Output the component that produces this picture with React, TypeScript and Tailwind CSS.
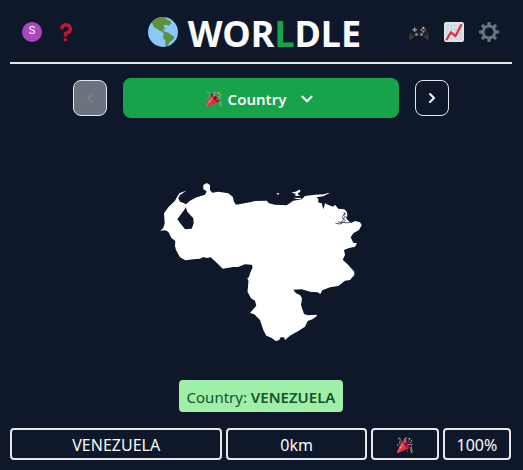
import { ChevronDown, ChevronLeft, ChevronRight } from "lucide-react";
import type { ReactNode } from "react";

function Globe() {
  return (
    <svg viewBox="0 0 36 36" className="size-[30px] shrink-0" aria-hidden="true">
      <circle cx="18" cy="18" r="18" fill="#88c9f9" />
      <path
        fill="#5c913b"
        d="M4.200 6.200C7 3.400 10 1.600 14 .5L19 .1l3 .5-.5 2 2 .7 3.700 1.700.3 2.800L25 10.500l-2.400-.9-2.800-.3-1.200 2.600 2.700 1-2.800 2.400-2 1.200 3.200-.5.2 2.300 2.700 1.300-3.900-.5-2.100-1.300-2.800-1.500-2.800-2-4-2.400-1.500-2.800z"
      />
      <path
        fill="#5c913b"
        d="M18.500 20.200l2.700-2.100 3.300.9 3.100 2.700 4 1.400-1.200 4-3.500 2.700-2.200 2.500-1.900 2.800-1.700-.2-.3-6.300-2.500-3.300z"
      />
    </svg>
  );
}

function QuestionMark() {
  return (
    <svg viewBox="0 0 36 36" className="size-5" aria-hidden="true">
      <path
        fill="#be1931"
        d="M17 27c-1.657 0-3-1.343-3-3v-4c0-1.657 1.343-3 3-3 .603-.006 6-1 6-5 0-2-2-4-5-4-2.441 0-4 2-4 3 0 1.657-1.343 3-3 3s-3-1.343-3-3c0-4.878 4.58-9 10-9 8 0 11 5.982 11 11 0 4.145-2.277 7.313-6.413 8.920-.9.351-1.790.587-2.587.747V24c0 1.657-1.343 3-3 3z"
      />
      <circle fill="#be1931" cx="17" cy="32" r="3" />
    </svg>
  );
}

function Gamepad() {
  return (
    <svg viewBox="0 0 36 36" className="size-5" aria-hidden="true">
      <path fill="#31373d" d="M3 16C0 22 0 28 .8 31c.9 1.800 3.600 1 5.200-1l5-6h14l5 6c1.600 2 4.300 2.800 5.200 1C36 28 36 22 33 16z" />
      <path
        fill="#191d21"
        d="M10 8c3 0 4 1.500 8 1.500S23 8 26 8c4 0 7 5 8 11l-4 4-3 1c-1 3-5 3-6 0h-6c-1 3-5 3-6 0l-3-1-4-4C3 13 6 8 10 8z"
      />
      <path fill="#8899a6" d="M9 10h2.500v2.800h2.800v2.500h-2.800v2.800H9v-2.800H6.200v-2.500H9z" />
      <circle cx="13.500" cy="22.500" r="3" fill="#66757f" />
      <circle cx="22.500" cy="22.500" r="3" fill="#66757f" />
      <circle cx="26" cy="10.500" r="2" fill="#ffcc4d" />
      <circle cx="29.300" cy="14" r="2" fill="#dd2e44" />
      <circle cx="22.700" cy="14" r="2" fill="#55acee" />
      <circle cx="26" cy="17.500" r="2" fill="#77b255" />
    </svg>
  );
}

function ChartUp() {
  return (
    <svg viewBox="0 0 36 36" className="size-5" aria-hidden="true">
      <rect width="36" height="36" rx="4" fill="#e1e8ed" />
      <path fill="#ccd6dd" d="M3 3h30v30H3z" />
      <path stroke="#e1e8ed" strokeWidth="1.500" d="M9.500 3v30M17 3v30M24.500 3v30M3 10h30M3 18h30M3 26h30" />
      <path
        d="M5 31l7.500-12.500 8 7L31 5.500"
        fill="none"
        stroke="#dd2e44"
        strokeWidth="4"
        strokeLinecap="round"
        strokeLinejoin="round"
      />
    </svg>
  );
}

function Gear() {
  return (
    <svg viewBox="0 0 36 36" className="size-5" aria-hidden="true">
      <path
        fill="#66757f"
        d="M34 15h-3.362c-.324-1.369-.864-2.651-1.582-3.814l2.379-2.379c.781-.781.781-2.048 0-2.829l-1.414-1.414c-.781-.781-2.047-.781-2.828 0l-2.379 2.379C23.65 6.225 22.369 5.686 21 5.362V2c0-1.104-.896-2-2-2h-2c-1.104 0-2 .896-2 2v3.362c-1.369.324-2.651.864-3.814 1.582L8.808 4.565c-.781-.781-2.048-.781-2.828 0L4.565 5.979c-.781.781-.781 2.048-.001 2.829l2.379 2.379C6.225 12.35 5.686 13.632 5.362 15H2c-1.104 0-2 .896-2 2v2c0 1.104.896 2 2 2h3.362c.324 1.368.864 2.65 1.582 3.813l-2.379 2.379c-.78.78-.78 2.048.001 2.829l1.414 1.414c.78.78 2.047.78 2.828 0l2.379-2.379c1.163.719 2.445 1.258 3.814 1.582V34c0 1.104.896 2 2 2h2c1.104 0 2-.896 2-2v-3.362c1.368-.324 2.65-.864 3.813-1.582l2.379 2.379c.781.781 2.047.781 2.828 0l1.414-1.414c.781-.781.781-2.048 0-2.829l-2.379-2.379c.719-1.163 1.258-2.445 1.582-3.814H34c1.104 0 2-.896 2-2v-2C36 15.896 35.104 15 34 15zM18 26c-4.418 0-8-3.582-8-8s3.582-8 8-8 8 3.582 8 8-3.582 8-8 8z"
      />
    </svg>
  );
}

function PartyPopper() {
  return (
    <svg viewBox="0 0 36 36" className="size-4 shrink-0" aria-hidden="true">
      <path fill="#dd2e44" d="M11.626 7.488c-.112.112-.197.247-.268.395l-.008-.008L.134 33.141l.011.011c-.208.403.14 1.223.853 1.937.713.713 1.533 1.061 1.936.853l.01.01L28.21 24.735l-.008-.009c.147-.07.282-.155.395-.269 1.562-1.562-.971-6.627-5.656-11.313-4.687-4.686-9.752-7.218-11.315-5.656z" />
      <path fill="#ea596e" d="M13 12l-.416-.282L.19 32.96l-.056.18.011.011c-.208.403.14 1.223.853 1.937.232.232.473.408.709.557L17 17l-4-5z" />
      <path fill="#a0041e" d="M23.012 13.066c4.67 4.672 7.263 9.652 5.789 11.124-1.473 1.474-6.453-1.118-11.126-5.788-4.671-4.672-7.263-9.654-5.79-11.127 1.474-1.473 6.454 1.119 11.127 5.791z" />
      <path fill="#aa8dd8" d="M18.59 13.609c-.199.161-.459.245-.734.215-.868-.094-1.598-.396-2.109-.873-.541-.505-.808-1.183-.735-1.862.128-1.192 1.324-2.286 3.363-2.066.793.085 1.147-.17 1.159-.292.014-.121-.277-.446-1.07-.532-.868-.094-1.598-.396-2.11-.873-.541-.505-.809-1.183-.735-1.862.13-1.192 1.325-2.286 3.362-2.065.578.062.883-.057 1.012-.134.103-.063.144-.123.148-.158.012-.121-.275-.446-1.07-.532-.549-.06-.947-.552-.886-1.102.059-.549.55-.946 1.101-.886 2.037.219 2.973 1.542 2.844 2.735-.13 1.194-1.325 2.286-3.364 2.067-.578-.063-.88.057-1.01.134-.103.062-.145.123-.149.157-.013.122.276.446 1.071.532 2.037.22 2.973 1.542 2.844 2.735-.129 1.192-1.324 2.286-3.362 2.065-.578-.062-.882.058-1.012.134-.104.064-.144.124-.148.158-.013.121.276.446 1.07.532.548.06.947.553.886 1.102-.028.274-.167.511-.366.671z" />
      <path fill="#77b255" d="M30.661 22.857c1.973-.557 3.334.323 3.658 1.478.324 1.154-.378 2.615-2.35 3.17-.77.216-1.001.584-.97.701.034.118.425.312 1.193.095 1.972-.555 3.333.325 3.657 1.479.326 1.155-.378 2.614-2.351 3.17-.769.216-1.001.585-.967.702.033.117.423.311 1.192.095.53-.149 1.084.16 1.233.691.148.532-.161 1.084-.693 1.234-1.971.555-3.333-.323-3.659-1.479-.324-1.154.379-2.613 2.353-3.169.77-.217 1.001-.584.967-.702-.032-.117-.422-.312-1.19-.096-1.974.556-3.334-.322-3.659-1.479-.325-1.154.378-2.613 2.351-3.17.768-.215.999-.585.967-.701-.034-.118-.423-.312-1.192-.096-.532.15-1.083-.16-1.233-.691-.149-.53.161-1.082.693-1.232z" />
      <path fill="#aa8dd8" d="M23.001 20.16c-.294 0-.584-.129-.782-.375-.345-.432-.274-1.061.156-1.406.218-.175 5.418-4.259 12.767-3.208.547.078.927.584.849 1.131-.078.546-.58.93-1.132.848-6.493-.922-11.187 2.754-11.233 2.791-.186.148-.406.219-.625.219z" />
      <path fill="#77b255" d="M5.754 16c-.095 0-.192-.014-.288-.042-.529-.159-.829-.716-.67-1.245 1.133-3.773 2.16-9.794.898-11.364-.141-.178-.354-.353-.842-.316-.938.072-.849 2.051-.848 2.071.042.551-.372 1.031-.922 1.072-.559.034-1.031-.372-1.072-.923-.103-1.379.326-4.035 2.692-4.214 1.056-.08 1.933.287 2.552 1.057 2.371 2.951-.036 11.506-.542 13.192-.13.433-.528.712-.958.712z" />
      <circle fill="#5c913b" cx="25.5" cy="9.5" r="1.5" />
      <circle fill="#9266cc" cx="2" cy="18" r="2" />
      <circle fill="#5c913b" cx="32.5" cy="19.5" r="1.5" />
      <circle fill="#5c913b" cx="23.5" cy="31.5" r="1.5" />
      <circle fill="#ffcc4d" cx="28" cy="4" r="2" />
      <circle fill="#ffcc4d" cx="32.5" cy="8.5" r="1.5" />
      <circle fill="#ffcc4d" cx="29.5" cy="12.5" r="1.5" />
      <circle fill="#ffcc4d" cx="7.5" cy="23.5" r="1.5" />
    </svg>
  );
}

function CountryShape() {
  return (
    <svg viewBox="160 182 202 160" className="h-40 w-[202px]" role="img" aria-label="Country outline">
      <path
        fill="#fff"
        fillRule="evenodd"
        d="M186.700 190.500L179.300 193.300 177 197 175 200.700 168.300 207.300 164 213.300 164.700 223.300 163.300 228 160.300 230.700 165 230.300 168.300 231.700 171.300 237.700 175.300 241 175 246 176 250 180 257.300 185.300 260.300 193.300 259.300 200 258.700 203.300 257 206.700 258 210.700 257.300 216.700 262.700 222.700 268.700 233 267 238 267 245 264.300 251.700 264.700 252.700 267.300 250 273.300 249 277 247.300 278.300 248.500 281 247.500 291.700 251 298.300 255 300.700 256.300 305.700 250 313 254.300 314.300 260 320 263.300 330 266.300 335.700 271.700 338 275.700 341 279 340.300 280.700 337.300 284 337.300 285 340 290 335.700 298.300 331 305 326.700 307.700 321 312.300 319.300 316.700 316.300 316.700 314.700 308.300 315.300 304 314 301 305 302 298.300 300 295 296 293.300 293.300 289.700 301.700 289.300 310 291.700 317.700 292.300 320.300 294 322.300 290.300 330 287.300 338.300 286 345 280.700 350 280 354.300 275 354.300 271.700 348.300 265 342.700 259.700 345 255 344 250 348.300 248.300 355 246.700 357 243.300 353.300 242.700 350.700 237.300 353.300 233.300 359 230 361.700 225 360 222.300 355 221 351.700 222.700 348.500 221 346 218 347.500 215 346.700 211.700 344.300 209.300 338.300 208.700 335 204.700 333.300 206.700 329 205.300 325 203.300 323.300 209.300 321.700 203.300 318.300 202.500 318.300 199 316.500 197.300 323.300 196.300 329.700 193 328 193 324 194.300 315 194.700 305 196 301.700 199.300 293.300 200.700 286.700 205.300 275 204.700 269 203.300 266.700 200.700 255 201 250 202.300 236 204.700 234 201.700 232.700 196.700 228.300 193.300 218.300 191.700 212.300 192.700 210 190 210 185 206.700 183 203.300 185 203.300 189.300 206.700 191.300 205 194.700 196.700 197.300 190 200.700 186 204.300 183.500 203 180 201.700 178.300 198.300 180 195zM184.700 209.300L177.300 219.300 181.700 225 185 229.300 191.700 228.700 193.700 223.300 193.300 218.300 187.300 211.700 185.700 207z"
      />
      <path fill="#fff" d="M276.300 193.800l1.700-.8 1.500.8-1.500.9zM291.500 192.600l4-.9 4.500-2.200.3 2.200-2.500 1.500.5 1.800 1.800.3-1 .8-4.200-.4 1-2-2-.2zM293.500 197.800l7 .2 1 1-5-.1z" />
      <path
        fill="none"
        stroke="#0f172a"
        strokeWidth=".7"
        d="M343.500 212.500l2 1-1.500 2 1.500 1.500-2 1.500 1.500 2-2.500 2.500M345 213l-2.500 3.500 1 3-3 3.500M335.500 223.200l4.500.8 3.500-1.600 3.500.4 4.500-.6M338 222l4.500.5"
      />
    </svg>
  );
}

function IconButton({ label, children }: { label: string; children: ReactNode }) {
  return (
    <button type="button" aria-label={label} className="flex size-5 items-center justify-center">
      {children}
    </button>
  );
}

function ResultCell({ wide = "", children }: { wide?: string; children: ReactNode }) {
  return (
    <div className={`flex h-8 items-center justify-center rounded border-2 border-gray-200 pt-0.5 ${wide}`}>
      {children}
    </div>
  );
}

export default function App() {
  return (
    <div className="min-h-screen bg-[#0f172a] pr-[11px] pb-2.5 pl-2.5 font-['Noto_Sans',sans-serif] text-base text-slate-50">
      <header className="flex h-16 items-center justify-between border-b-2 border-gray-200 px-3 pt-px">
        <div className="flex w-[78px] items-center gap-3.5">
          <button
            type="button"
            aria-label="Profile"
            className="flex size-5 items-center justify-center rounded-full bg-[#ab47bc] font-[Roboto,sans-serif] text-[11px] text-white"
          >
            S
          </button>
          <IconButton label="How to play">
            <QuestionMark />
          </IconButton>
        </div>
        <h1 className="flex items-center gap-2.5 text-4xl font-bold">
          <Globe />
          <span className="pt-1">
            WOR<span className="text-[#16a34a]">L</span>DLE
          </span>
        </h1>
        <nav className="flex items-center gap-[15px] pr-px">
          <IconButton label="Other games">
            <Gamepad />
          </IconButton>
          <IconButton label="Statistics">
            <ChartUp />
          </IconButton>
          <IconButton label="Settings">
            <Gear />
          </IconButton>
        </nav>
      </header>

      <main className="flex flex-col items-center">
        <div className="mt-3.5 flex w-3/4 items-center gap-4">
          <button
            type="button"
            disabled
            aria-label="Previous round"
            className="flex h-9 w-[34px] items-center justify-center rounded-lg border border-gray-200 bg-[#6b7280] text-[#85807a]"
          >
            <ChevronLeft className="size-4" strokeWidth={3} />
          </button>
          <button
            type="button"
            aria-haspopup="listbox"
            className="flex h-10 flex-1 items-center justify-center rounded-lg bg-[#16a34a] pt-0.5 text-[15px] font-semibold"
          >
            <PartyPopper />
            <span className="mr-3 ml-1.5">Country</span>
            <ChevronDown className="size-[18px]" strokeWidth={3} />
          </button>
          <button
            type="button"
            aria-label="Next round"
            className="flex h-9 w-[34px] items-center justify-center rounded-lg border border-gray-200"
          >
            <ChevronRight className="size-4" strokeWidth={3} />
          </button>
        </div>

        <div className="mt-16">
          <CountryShape />
        </div>

        <p className="mt-[38px] flex h-8 items-center rounded bg-[#9fefa9] px-2 pt-0.5 text-[15px] whitespace-pre text-[#14532d]">
          Country: <strong className="font-semibold">VENEZUELA</strong>
        </p>

        <div className="mt-4 w-full pr-px">
          <div className="grid grid-cols-7 gap-1">
            <ResultCell wide="col-span-3">VENEZUELA</ResultCell>
            <ResultCell wide="col-span-2">0km</ResultCell>
            <ResultCell>
              <PartyPopper />
            </ResultCell>
            <ResultCell>100%</ResultCell>
          </div>
        </div>
      </main>
    </div>
  );
}
